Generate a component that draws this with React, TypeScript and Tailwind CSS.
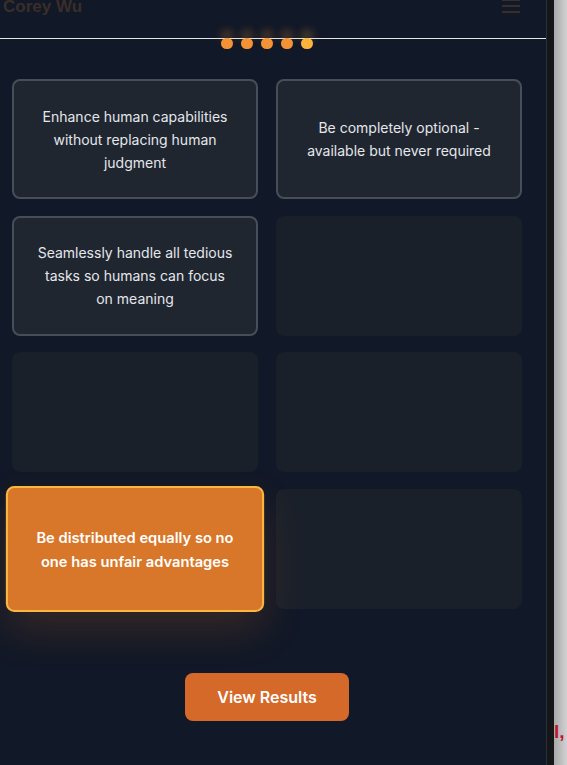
import React from "react";

const cards: { text: string; state: "filled" | "empty" | "selected" }[] = [
  { text: "Enhance human capabilities without replacing human judgment", state: "filled" },
  { text: "Be completely optional - available but never required", state: "filled" },
  { text: "Seamlessly handle all tedious tasks so humans can focus on meaning", state: "filled" },
  { text: "", state: "empty" },
  { text: "", state: "empty" },
  { text: "", state: "empty" },
  { text: "Be distributed equally so no one has unfair advantages", state: "selected" },
  { text: "", state: "empty" },
];

export default function App() {
  return (
    <div className="flex h-[765px] w-full overflow-hidden" style={{ fontFamily: "Inter, 'Noto Sans', sans-serif" }}>
      <div className="relative flex w-[547px] shrink-0 flex-col bg-[#111827] border-r border-[#2a2f38]">
        {/* header */}
        <div className="relative h-[39px] border-b border-[#e5e5e5]">
          <div
            className="absolute left-[3px] top-[-3px] text-[17px] font-bold leading-[20px] text-[#3a2e28]"
            style={{ fontFamily: "'Liberation Sans', Arial, sans-serif" }}
          >
            Corey Wu
          </div>
          <div className="absolute left-[502px] top-[-1px] flex w-[18px] flex-col gap-[4px]">
            <span className="block h-[2px] w-full bg-[#3a2e28]" />
            <span className="block h-[2px] w-full bg-[#3a2e28]" />
            <span className="block h-[2px] w-full bg-[#3a2e28]" />
          </div>
        </div>
        {/* progress dots */}
        <div className="relative z-0 mt-[-1px] flex w-[534px] justify-center gap-[8px]">
          {[0, 1, 2, 3, 4].map((i) => (
            <span
              key={i}
              className={
                i === 4
                  ? "block h-[11px] w-[12px] rounded-full bg-[#fbb33b] shadow-[0_-8px_8px_rgba(251,179,59,0.28)]"
                  : "block h-[11px] w-[12px] rounded-full bg-[#f49236] shadow-[0_-8px_8px_rgba(244,146,54,0.28)]"
              }
            />
          ))}
        </div>
        {/* grid */}
        <div className="mt-[30px] grid w-[534px] grid-cols-[246px_246px] gap-x-[18px] gap-y-[16.5px] pl-[12px]">
          {cards.map((c, i) => {
            if (c.state === "empty") {
              return <div key={i} className="h-[120px] rounded-[8px] bg-[#1a202a]" />;
            }
            if (c.state === "selected") {
              return (
                <div
                  key={i}
                  className="flex h-[120px] scale-[1.05] items-center justify-center rounded-[8px] border-2 border-[#f8b740] bg-[#d87629] px-6 text-center text-[14px] font-semibold leading-[23px] text-white shadow-[0_18px_40px_rgba(234,120,40,0.16)]"
                >
                  {c.text}
                </div>
              );
            }
            return (
              <div
                key={i}
                className="flex h-[120px] items-center justify-center rounded-[8px] border-2 border-[#474e5a] bg-[#1f2630] px-[23px] text-center text-[14px] leading-[23px] text-[#e5e7eb]"
              >
                {c.text}
              </div>
            );
          })}
        </div>
        {/* button */}
        <div className="mt-[64px] flex w-[534px] justify-center">
          <button className="h-[48px] w-[164px] rounded-[8px] bg-[#d4692a] text-[16px] font-semibold text-white">
            View Results
          </button>
        </div>
      </div>
      <div className="w-[7px] shrink-0 bg-[#151618]" />
      <div className="relative flex-1 overflow-hidden bg-gradient-to-r from-[#a9a9a9] to-[#d2d2d2]">
        <span
          className="absolute left-[0px] top-[720px] text-[19px] font-bold leading-[24px] text-[#c8102e]"
          style={{ fontFamily: "'Liberation Sans', Arial, sans-serif" }}
        >
          l,
        </span>
      </div>
    </div>
  );
}
